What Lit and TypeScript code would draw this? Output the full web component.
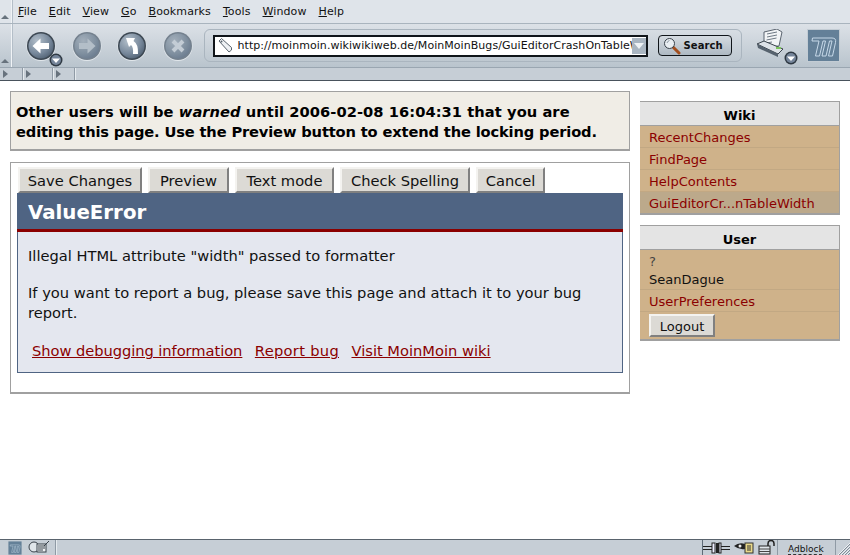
import { LitElement, html, css, svg } from "lit";
import { customElement } from "lit/decorators.js";

/* browser chrome icons */

const ball = (id: string, glyph: unknown, dim = false) => html`
  <svg class="ball" width="30" height="30" viewBox="0 0 30 30">
    <defs>
      <radialGradient id=${id} cx="0.35" cy="0.3" r="0.85">
        <stop offset="0" stop-color=${dim ? "#a3afbb" : "#b3bfca"}></stop>
        <stop offset="0.6" stop-color=${dim ? "#7f8f9f" : "#76879a"}></stop>
        <stop offset="1" stop-color=${dim ? "#64758a" : "#465668"}></stop>
      </radialGradient>
    </defs>
    <circle cx="15" cy="15.500" r="14.500" fill="#e2e7ec"></circle>
    <circle cx="15" cy="15" r="14" fill=${dim ? "#74818e" : "#3d4853"}></circle>
    <circle cx="15" cy="15" r="12.500" fill="url(#${id})"></circle>
    ${glyph}
  </svg>
`;

const menuDrop = html`
  <svg class="drop" width="14" height="14" viewBox="0 0 14 14">
    <circle cx="7" cy="7" r="6.500" fill="#2f3943"></circle>
    <circle cx="7" cy="7" r="5" fill="#75859a"></circle>
    <path d="M3 5.500h8L7 10z" fill="#fff"></path>
  </svg>
`;

const logo = (size: number) => html`
  <svg width=${size} height=${size} viewBox="0 0 33 33">
    <rect width="33" height="33" fill="#c3ccd4"></rect>
    <rect x="1" y="1" width="31" height="31" fill="#648098"></rect>
    <path
      d="M5.500 9H25q4.500 0 3.500 4.500L25.500 27H21.500L25 12h-2.500L19 27h-4l3.500-15H16L12.500 27h-4L12 12H5z"
      fill="none"
      stroke="#c6d8e8"
    ></path>
  </svg>
`;

const tagIcon = html`
  <svg width="17" height="17" viewBox="0 0 17 17">
    <path d="M2 4l2.500-2.500 10 9v2.500l-2.500 2z" fill="#eef1f4" stroke="#59636d"></path>
    <circle cx="4.500" cy="4.500" r="1" fill="#59636d"></circle>
  </svg>
`;

const lens = html`
  <svg width="18" height="18" viewBox="0 0 18 18">
    <path d="M10 10l6 6" stroke="#a34f1f" stroke-width="3" stroke-linecap="round"></path>
    <circle cx="6.500" cy="6.500" r="5" fill="#e9eef2" stroke="#39424b"></circle>
    <path d="M4 6q.5-2 2.500-2.500" fill="none" stroke="#8d99a4"></path>
  </svg>
`;

const printer = html`
  <svg width="30" height="28" viewBox="0 0 30 28">
    <path d="M8 3l13-3 5 3-3 14-15 1z" fill="#f2f4f6" stroke="#5b6570"></path>
    <path d="M11 5l10-2M11 8l10-2M10.500 11l10-2M10 14l6-1" stroke="#6f7a85"></path>
    <path d="M1 15l7-3 19 8-5 5z" fill="#dde2e7" stroke="#39424b"></path>
    <path d="M1 15l21 10v3L2 19z" fill="#56626e"></path>
    <rect x="20" y="18" width="5" height="2" fill="#7cc45c"></rect>
  </svg>
`;

const mailIcon = html`
  <svg width="22" height="15" viewBox="0 0 22 15">
    <circle cx="6" cy="7" r="5" fill="#dfe5ea" stroke="#39424b"></circle>
    <rect x="9" y="4" width="9" height="8" fill="#eef1f4" stroke="#39424b"></rect>
    <path d="M10 6h7M10 8h7M10 10h5" stroke="#39424b"></path>
    <path d="M16 6l5-5" stroke="#39424b"></path>
  </svg>
`;

const plugIcon = html`
  <svg width="27" height="14" viewBox="0 0 27 14">
    <path d="M0 5.500h9M0 8.500h9M18 5.500h9M18 8.500h9" stroke="#222"></path>
    <rect x="9" y="2" width="3" height="10" fill="#eef" stroke="#222"></rect>
    <rect x="13" y="2" width="3" height="10" fill="#222"></rect>
    <rect x="16" y="2" width="2" height="10" fill="#eef" stroke="#222"></rect>
  </svg>
`;

const eyeIcon = html`
  <svg width="20" height="14" viewBox="0 0 20 14">
    <path d="M0 5q5-4 11-2v5q-6 1-11-3z" fill="#222"></path>
    <circle cx="6" cy="5" r="1.500" fill="#eee"></circle>
    <rect x="11" y="2" width="8" height="10" fill="#e9d98a" stroke="#333"></rect>
    <path d="M13 5h4M13 7h4M13 9h4" stroke="#333"></path>
  </svg>
`;

const lockIcon = html`
  <svg width="19" height="15" viewBox="0 0 19 15">
    <path d="M10 6V3.500a3 3 0 0 1 6 0V6" fill="none" stroke="#222" stroke-width="1.500"></path>
    <rect x="1" y="6" width="11" height="8" fill="#dfe5ea" stroke="#222"></rect>
    <path d="M1 9h11M1 11.500h11" stroke="#444"></path>
  </svg>
`;

const gripIcon = html`
  <svg width="15" height="15" viewBox="0 0 15 15">
    <path
      d="M15 2L2 15M15 5L5 15M15 8L8 15M15 11L11 15"
      stroke="#eef1f4"
    ></path>
    <path
      d="M15 3L3 15M15 6L6 15M15 9L9 15M15 12L12 15"
      stroke="#7f8b97"
    ></path>
  </svg>
`;

const upHandle = svg`<path d="M1 8l4-4 4 4z" fill="#67727d"></path>`;

@customElement("browser-chrome")
export class BrowserChrome extends LitElement {
  static styles = css`
    :host {
      display: block;
      height: 81px;
      font-family: "DejaVu Sans", sans-serif;
      color: #111;
      background: #dde2e8;
      border-bottom: 1px solid #49525c;
      box-sizing: border-box;
    }

    .row {
      display: flex;
    }

    .handle {
      width: 11px;
      flex: none;
      display: flex;
      align-items: flex-end;
      border-right: 1px solid #f0f3f6;
      box-shadow: 1px 0 0 #b4bec8;
    }

    .handle svg {
      display: block;
      margin-bottom: 2px;
    }

    .menus {
      height: 23px;
      border-bottom: 1px solid #a9b4be;
      background: #dfe4ea;
    }

    .menu-list {
      display: flex;
      gap: 12px;
      padding: 5px 0 0 6px;
      font-size: 11px;
      letter-spacing: 0.1px;
      line-height: 14px;
    }

    .menu-list u {
      text-underline-offset: 1px;
    }

    .toolbar {
      height: 43px;
      background: linear-gradient(#dce1e7, #b9c4cd);
      border-bottom: 1px solid #9aa6b1;
    }

    .tools {
      flex: 1;
      display: flex;
      align-items: center;
      padding-left: 14px;
    }

    .balls {
      display: flex;
      gap: 15.500px;
    }

    .ball-wrap {
      position: relative;
      display: block;
      height: 30px;
    }

    .ball {
      display: block;
    }

    .drop {
      position: absolute;
      right: -7px;
      bottom: -6px;
    }

    .url-well {
      margin-left: 11px;
      width: 538px;
      height: 33px;
      box-sizing: border-box;
      border: 1px solid #aab5bf;
      border-radius: 6px;
      display: flex;
      align-items: center;
      padding-left: 8px;
      gap: 10px;
    }

    .url {
      width: 435px;
      height: 22px;
      box-sizing: border-box;
      border: 2px solid #10151a;
      background: #fff;
      display: flex;
      align-items: center;
      font-size: 11px;
      letter-spacing: 0.05px;
      white-space: nowrap;
      overflow: hidden;
      position: relative;
      padding-left: 2px;
      gap: 4px;
    }

    .url svg {
      flex: none;
    }

    .url-arrow {
      position: absolute;
      right: 0;
      top: 1px;
      width: 14px;
      height: 16px;
      background: #a9b5c1;
      display: flex;
      align-items: center;
      justify-content: center;
    }

    .url-arrow i {
      border: 5px solid transparent;
      border-top: 6px solid #eef2f5;
      border-bottom: 0;
    }

    .search {
      width: 74px;
      height: 21px;
      box-sizing: border-box;
      border: 1px solid #10151a;
      border-radius: 4px;
      background: linear-gradient(#d5dbe1, #aeb9c3);
      display: flex;
      align-items: center;
      gap: 3px;
      padding-left: 4px;
      font-size: 10px;
      font-weight: bold;
      letter-spacing: 0.1px;
    }

    .print {
      position: relative;
      margin-left: 14px;
      height: 28px;
      margin-top: -6px;
    }

    .print .drop {
      right: -12px;
      bottom: -8px;
    }

    .brand {
      margin-left: 21px;
      display: block;
    }

    .brand svg {
      display: block;
    }

    .tabs {
      height: 12px;
      background: #c6ced6;
      display: flex;
    }

    .tab {
      box-sizing: border-box;
      border-right: 1px solid #8f9aa5;
      box-shadow: 1px 0 0 #e6ebef;
      padding-left: 3px;
      display: flex;
      align-items: center;
    }

    .tab i {
      border: 4px solid transparent;
      border-left: 5px solid #67727d;
      border-right: 0;
    }

    .tab.first {
      width: 23px;
    }

    .tab.second {
      width: 30px;
    }

    .tab.third {
      width: 22px;
    }
  `;

  render() {
    return html`
      <div class="row menus">
        <div class="handle">
          <svg width="10" height="10" viewBox="0 0 10 10">${upHandle}</svg>
        </div>
        <div class="menu-list">
          <span><u>F</u>ile</span>
          <span><u>E</u>dit</span>
          <span><u>V</u>iew</span>
          <span><u>G</u>o</span>
          <span><u>B</u>ookmarks</span>
          <span><u>T</u>ools</span>
          <span><u>W</u>indow</span>
          <span><u>H</u>elp</span>
        </div>
      </div>
      <div class="row toolbar">
        <div class="handle">
          <svg width="10" height="10" viewBox="0 0 10 10">${upHandle}</svg>
        </div>
        <div class="tools">
          <div class="balls">
            <span class="ball-wrap">
              ${ball("bk", svg`<path d="M14.500 7.500L6.500 15l8 7.500v-4.500H23v-6h-8.500z" fill="#fff"></path>`)}
              ${menuDrop}
            </span>
            <span class="ball-wrap">
              ${ball("fw", svg`<path d="M15.500 7.500l8 7.500-8 7.500v-4.500H7v-6h8.500z" fill="#b3bec8"></path>`, true)}
            </span>
            <span class="ball-wrap">
              ${ball("rl", svg`<path d="M9 7h9l-1.500 3q5 3 4.500 13h-5q.5-7-2-9l-2 2z" fill="#fff"></path>`)}
            </span>
            <span class="ball-wrap">
              ${ball("st", svg`<path d="M10 10l10 10M20 10l-10 10" stroke="#c3ccd5" stroke-width="4"></path>`, true)}
            </span>
          </div>
          <div class="url-well">
            <div class="url">
              ${tagIcon}
              <span>http://moinmoin.wikiwikiweb.de/MoinMoinBugs/GuiEditorCrashOnTableWidth</span>
              <span class="url-arrow"><i></i></span>
            </div>
            <div class="search">${lens}<span>Search</span></div>
          </div>
          <div class="print">${printer}${menuDrop}</div>
          <div class="brand">${logo(33)}</div>
        </div>
      </div>
      <div class="tabs">
        <span class="tab first"><i></i></span>
        <span class="tab second"><i></i></span>
        <span class="tab third"><i></i></span>
      </div>
    `;
  }
}

@customElement("status-bar")
export class StatusBar extends LitElement {
  static styles = css`
    :host {
      display: flex;
      height: 15px;
      background: #c6ced6;
      border-top: 1px solid #59636d;
      font-family: "DejaVu Sans", sans-serif;
      overflow: hidden;
    }

    .left {
      width: 47px;
      padding-left: 8px;
      display: flex;
      gap: 6px;
      align-items: center;
      border-right: 1px solid #8f9aa5;
      box-shadow: 1px 0 0 #e6ebef;
    }

    .left svg,
    .right svg {
      flex: none;
      display: block;
    }

    .mid {
      flex: 1;
    }

    .right {
      display: flex;
      align-items: center;
      width: 147px;
      border-left: 1px solid #5f6b77;
    }

    .right .icons {
      display: flex;
      gap: 4px;
      align-items: center;
      width: 74px;
      flex: none;
      border-right: 1px solid #8f9aa5;
      height: 100%;
    }

    .adblock {
      width: 58px;
      flex: none;
      font-size: 9px;
      line-height: 11px;
      padding: 4px 0 0 10px;
      box-sizing: border-box;
      height: 100%;
      border-right: 1px solid #8f9aa5;
      color: #111;
      overflow: hidden;
      position: relative;
    }

    .adblock i {
      position: absolute;
      left: 10px;
      top: 14px;
      width: 34px;
      border-top: 1px dashed #333;
    }
  `;

  render() {
    return html`
      <div class="left">${logo(14)}${mailIcon}</div>
      <div class="mid"></div>
      <div class="right">
        <div class="icons">${plugIcon}${eyeIcon}${lockIcon}</div>
        <div class="adblock">Adblock<i></i></div>
        ${gripIcon}
      </div>
    `;
  }
}

/* wiki page */

@customElement("app-root")
export class AppRoot extends LitElement {
  static styles = css`
    :host {
      display: flex;
      flex-direction: column;
      width: 850px;
      height: 555px;
      overflow: hidden;
      background: #fff;
      font-family: "DejaVu Sans", sans-serif;
      font-size: 14.67px;
    }

    .page {
      flex: 1;
      display: flex;
      gap: 10px;
      padding: 10px 10px 0;
      align-items: flex-start;
      min-height: 0;
    }

    .main {
      width: 620px;
      flex: none;
      display: flex;
      flex-direction: column;
      gap: 11px;
    }

    .warning {
      height: 60px;
      box-sizing: border-box;
      background: #f0ede6;
      border: 1px solid #a0a0a0;
      border-bottom-width: 2px;
      padding: 10px 5px 0;
      font-weight: bold;
      font-size: 14.67px;
      line-height: 20px;
      color: #000;
    }

    .warning span {
      display: block;
      white-space: nowrap;
      letter-spacing: 0.06px;
    }

    .warning span.tight {
      letter-spacing: -0.15px;
    }

    .editor {
      height: 232px;
      box-sizing: border-box;
      border: 1px solid #a0a0a0;
      border-bottom-width: 2px;
      padding: 4px 6px 0;
    }

    .actions {
      display: grid;
      grid-template-columns: 124px 81px 99px 130px 69px;
      gap: 6px;
      padding-left: 1px;
    }

    .btn {
      font-family: inherit;
      font-size: 14.67px;
      line-height: 20px;
      color: #111;
      background: #dcdad5;
      border: 2px solid;
      border-color: #f4f3f0 #808080 #808080 #f4f3f0;
      padding: 2px 0 0;
      height: 26px;
      box-sizing: border-box;
      margin: 0;
      white-space: nowrap;
    }

    .panel {
      background: #e4e7ef;
      border: 1px solid #4f6483;
      border-top: 0;
      height: 180px;
      box-sizing: border-box;
    }

    .panel h1 {
      margin: 0 -1px;
      height: 39px;
      box-sizing: border-box;
      background: #4f6483;
      color: #fff;
      font-size: 19.800px;
      line-height: 39px;
      font-weight: bold;
      padding-left: 11px;
      border-bottom: 3px solid #8b0000;
    }

    .panel p {
      margin: 0;
      padding: 0 10px;
      line-height: 20px;
      color: #111;
    }

    .panel .lead {
      margin-top: 14px;
    }

    .panel .more {
      margin-top: 17px;
    }

    .links {
      display: flex;
      gap: 12.500px;
      padding: 18px 14px 0;
      line-height: 20px;
    }

    .links a:first-child {
      letter-spacing: -0.05px;
    }

    .links a:nth-child(2) {
      letter-spacing: 0.3px;
    }

    a {
      color: #8b0000;
    }

    .side {
      width: 200px;
      flex: none;
      display: flex;
      flex-direction: column;
      gap: 10px;
      padding-top: 10px;
    }

    .box {
      background: #cfb28a;
      border-bottom: 2px solid #a0a0a0;
    }

    .box h2 {
      margin: 0;
      height: 25px;
      box-sizing: border-box;
      background: #e4e4e4;
      border: 1px solid #a0a0a0;
      border-width: 1px 1px 1px 0;
      font-size: 13px;
      line-height: 28px;
      font-weight: bold;
      text-align: center;
      color: #000;
    }

    .box ul {
      list-style: none;
      margin: 0;
      padding: 0;
      border-right: 1px solid #a0a0a0;
    }

    .box li {
      height: 22px;
      box-sizing: border-box;
      padding-left: 9px;
      font-size: 13px;
      line-height: 23px;
      color: #8b0000;
      border-bottom: 1px solid #c2a883;
    }

    .box li:last-child {
      border-bottom: 0;
    }

    .box li.current {
      background: #bca98b;
      height: 21px;
    }

    .box li.who {
      height: 40px;
      color: #111;
      padding-top: 3px;
      line-height: 18px;
    }

    .box li.who span {
      display: block;
      color: #444;
    }

    .box li.logout {
      height: 27px;
      padding-top: 2px;
    }

    .logout-btn {
      display: block;
      font-family: inherit;
      font-size: 13px;
      color: #111;
      background: #dcdad5;
      border: 2px solid;
      border-color: #f4f3f0 #808080 #808080 #f4f3f0;
      height: 23px;
      width: 66px;
      padding: 1px 0 0;
      box-sizing: border-box;
    }
  `;

  render() {
    return html`
      <browser-chrome></browser-chrome>
      <div class="page">
        <div class="main">
          <div class="warning">
            <span>Other users will be <em>warned</em> until 2006-02-08 16:04:31 that you are</span>
            <span class="tight">editing this page. Use the Preview button to extend the locking period.</span>
          </div>
          <div class="editor">
            <div class="actions">
              <button class="btn">Save Changes</button>
              <button class="btn">Preview</button>
              <button class="btn">Text mode</button>
              <button class="btn">Check Spelling</button>
              <button class="btn">Cancel</button>
            </div>
            <div class="panel">
              <h1>ValueError</h1>
              <p class="lead">Illegal HTML attribute "width" passed to formatter</p>
              <p class="more">If you want to report a bug, please save this page and attach it to your bug report.</p>
              <div class="links">
                <a href="#">Show debugging information</a>
                <a href="#">Report bug</a>
                <a href="#">Visit MoinMoin wiki</a>
              </div>
            </div>
          </div>
        </div>
        <div class="side">
          <div class="box">
            <h2>Wiki</h2>
            <ul>
              <li>RecentChanges</li>
              <li>FindPage</li>
              <li>HelpContents</li>
              <li class="current">GuiEditorCr...nTableWidth</li>
            </ul>
          </div>
          <div class="box">
            <h2>User</h2>
            <ul>
              <li class="who"><span>?</span>SeanDague</li>
              <li>UserPreferences</li>
              <li class="logout"><button class="logout-btn">Logout</button></li>
            </ul>
          </div>
        </div>
      </div>
      <status-bar></status-bar>
    `;
  }
}
